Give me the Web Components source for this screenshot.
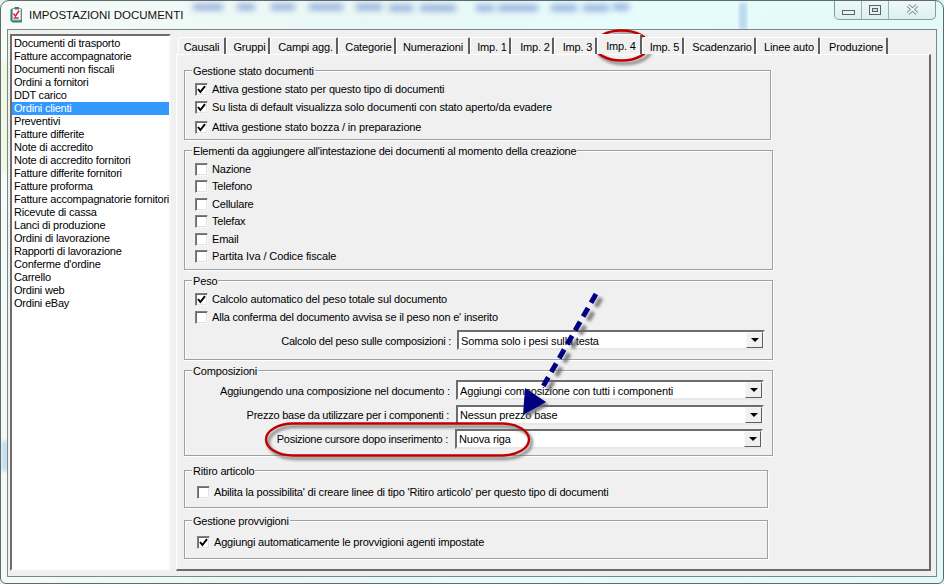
<!DOCTYPE html>
<html>
<head>
<meta charset="utf-8">
<title>Impostazioni documenti</title>
<style>
  html, body { margin: 0; padding: 0; background: #dff3f3; }
  body { font: 11px "Liberation Sans", Arial, sans-serif; letter-spacing: -.16px; color: #000; width: 944px; height: 584px; overflow: hidden; }
</style>
</head>
<body>
<win-frame caption="IMPOSTAZIONI DOCUMENTI">
  <doc-list></doc-list>
  <tab-pane>
    <group-box caption="Gestione stato documenti" style="--w:587px;--h:70px;--pad:11px;margin-top:0">
      <check-row checked>Attiva gestione stato per questo tipo di documenti</check-row>
      <check-row checked style="margin-top:4px">Su lista di default visualizza solo documenti con stato aperto/da evadere</check-row>
      <check-row checked style="margin-top:6px">Attiva gestione stato bozza / in preparazione</check-row>
    </group-box>
    <group-box caption="Elementi da aggiungere all'intestazione dei documenti al momento della creazione" style="--w:589px;--h:120px;--pad:11px;margin-top:10px;letter-spacing:-.21px">
      <check-row>Nazione</check-row>
      <check-row style="margin-top:3px">Telefono</check-row>
      <check-row style="margin-top:4px">Cellulare</check-row>
      <check-row style="margin-top:3px">Telefax</check-row>
      <check-row style="margin-top:4px">Email</check-row>
      <check-row style="margin-top:3px;letter-spacing:-.1px">Partita Iva / Codice fiscale</check-row>
    </group-box>
    <group-box caption="Peso" style="--w:589px;--h:80px;--pad:11px;margin-top:10px">
      <check-row checked>Calcolo automatico del peso totale sul documento</check-row>
      <check-row style="margin-top:4px;letter-spacing:-.19px">Alla conferma del documento avvisa se il peso non e' inserito</check-row>
      <combo-row value="Somma solo i pesi sulla testa" style="--lw:266px;--cw:308px;--lg:6px;--ty:2px;--ls:-.27px;margin-top:6px">Calcolo del peso sulle composizioni :</combo-row>
    </group-box>
    <group-box caption="Composizioni" style="--w:589px;--h:86px;--pad:9px;margin-top:10px">
      <combo-row value="Aggiungi composizione con tutti i componenti" style="--lw:265px;--cw:308px;--lg:6px;--ty:2px;--ls:-.18px">Aggiungendo una composizione nel documento :</combo-row>
      <combo-row value="Nessun prezzo base" style="--lw:264px;--cw:308px;--lg:7px;--ls:-.25px;margin-top:5px">Prezzo base da utilizzare per i componenti :</combo-row>
      <combo-row value="Nuova riga" style="--lw:263px;--cw:308px;--lg:7px;--ls:-.27px;margin-top:4px">Posizione cursore dopo inserimento :</combo-row>
    </group-box>
    <group-box caption="Ritiro articolo" style="--w:584px;--h:38px;--pad:14px;--ci:12px;margin-top:14px;letter-spacing:-.19px">
      <check-row>Abilita la possibilita' di creare linee di tipo 'Ritiro articolo' per questo tipo di documenti</check-row>
    </group-box>
    <group-box caption="Gestione provvigioni" style="--w:584px;--h:39px;--pad:14px;--ci:12px;margin-top:12px;letter-spacing:-.2px">
      <check-row checked>Aggiungi automaticamente le provvigioni agenti impostate</check-row>
    </group-box>
  </tab-pane>
  <note-overlay slot="overlay"></note-overlay>
</win-frame>

<script>
class WinFrame extends HTMLElement {
  constructor() {
    super();
    this.attachShadow({ mode: 'open' });
    this.shadowRoot.innerHTML = `
      <style>
        :host { display: block; width: 944px; height: 584px; position: relative; overflow: hidden; }
        .frame { box-sizing: border-box; width: 944px; height: 584px; border: 1px solid #5f6a6e; border-radius: 9px 9px 6px 6px;
          background: linear-gradient(100deg, #f6fbf6 0%, #e9f8f5 35%, #e6fcfc 60%, #e2f9fa 100%);
          position: relative; overflow: hidden; display: flex; flex-direction: column; padding: 0 6px 6px; }
        .glass { position: absolute; left: 0; top: 0; width: 944px; height: 584px; }
        .bar { position: relative; height: 28px; display: flex; align-items: flex-start; flex: none; }
        .bar svg.doc { margin: 6px 0 0 3px; flex: none; }
        .cap { margin: 7px 0 0 6px; font-size: 11.5px; letter-spacing: 0; line-height: 14px; color: #111; text-shadow: 0 0 4px #fff; flex: 1; }
        .client { position: relative; flex: 1; box-sizing: border-box; border: 1px solid #7d8689; background: #f0f0f0;
          display: flex; padding: 4px 5px 5px 2px; gap: 5px; min-height: 0; }
        caption-btns { margin: -1px 1px 0 0; }
      </style>
      <div class="frame">
        <svg class="glass" viewBox="0 0 944 584" aria-hidden="true">
          <defs><filter id="b" x="-30%" y="-300%" width="160%" height="700%"><feGaussianBlur stdDeviation="3.2"/></filter>
          <filter id="c"><feGaussianBlur stdDeviation="2"/></filter></defs>
          <g fill="#8fa9dc" filter="url(#b)">
            <rect x="192" y="3" width="30" height="6"/><rect x="236" y="3" width="18" height="6"/>
            <rect x="270" y="3" width="24" height="6"/><rect x="308" y="3" width="34" height="6"/>
            <rect x="355" y="3" width="26" height="6"/><rect x="388" y="4" width="24" height="6"/>
            <rect x="419" y="4" width="36" height="6"/><rect x="475" y="4" width="18" height="6"/>
            <rect x="497" y="4" width="40" height="6"/><rect x="550" y="4" width="26" height="6"/>
            <rect x="582" y="4" width="26" height="6"/><rect x="612" y="3" width="16" height="6"/>
          </g>
          <rect x="738" y="2" width="8" height="27" fill="#bcd6ee" filter="url(#c)"/>
          <rect x="1" y="60" width="6" height="110" fill="#eef6d8" filter="url(#c)"/>
          <rect x="1" y="440" width="6" height="30" fill="#bcd8ee" filter="url(#c)"/>
        </svg>
        <div class="bar">
          <svg class="doc" width="13" height="16" viewBox="0 0 13 16" aria-hidden="true">
            <path d="M1 2.5h10.5V15H2.5L1 13.5Z" fill="#2f9c98" stroke="#2c6f76"/>
            <rect x="2.5" y="1.5" width="8.5" height="11.5" fill="#fff" stroke="#93a4aa"/>
            <rect x="4.5" y="0" width="4.5" height="2.5" fill="#55707a"/>
            <path d="M3.5 6.5l2 2.6 3.6-5.6M3.7 11h5" fill="none" stroke="#d02a2a" stroke-width="1.5"/>
          </svg>
          <span class="cap"></span>
          <caption-btns></caption-btns>
        </div>
        <div class="client"><slot></slot></div>
      </div>
      <slot name="overlay"></slot>
    `;
  }

  connectedCallback() {
    this.shadowRoot.querySelector('.cap').textContent = this.getAttribute('caption');
  }
}

class CaptionBtns extends HTMLElement {
  constructor() {
    super();
    this.attachShadow({ mode: 'open' });
    this.shadowRoot.innerHTML = `
      <style>
        :host { display: flex; height: 20px; box-sizing: border-box; border: 1px solid #8b9aa0; border-top: 0; border-radius: 0 0 5px 5px;
          background: linear-gradient(#eef9f9, #dcf0f0); }
        div { display: flex; align-items: center; justify-content: center; height: 100%; border-right: 1px solid #9fb0b4; box-sizing: border-box; }
        div:last-child { border-right: 0; }
        .min { width: 27px; padding-top: 6px; } .max { width: 27px; } .close { width: 46px; }
        svg { display: block; }
      </style>
      <div class="min"><svg width="13" height="5" viewBox="0 0 13 5"><rect x=".5" y=".5" width="12" height="4" fill="#e8f2f2" stroke="#56646a"/></svg></div>
      <div class="max"><svg width="12" height="10" viewBox="0 0 12 10"><rect x=".5" y=".5" width="11" height="9" fill="#e8f2f2" stroke="#56646a"/><rect x="3.5" y="3.5" width="5" height="3" fill="#cfdcdf" stroke="#56646a"/></svg></div>
      <div class="close"><svg width="13" height="11" viewBox="0 0 13 11"><path d="M2 1.5l9 8M11 1.5l-9 8" stroke="#6b7b80" stroke-width="3.6" fill="none"/><path d="M2 1.5l9 8M11 1.5l-9 8" stroke="#f2f7f7" stroke-width="1.7" fill="none"/></svg></div>
    `;
  }
}

class DocList extends HTMLElement {
  constructor() {
    super();
    this.attachShadow({ mode: 'open' });
    const items = ['Documenti di trasporto', 'Fatture accompagnatorie', 'Documenti non fiscali', 'Ordini a fornitori',
      'DDT carico', 'Ordini clienti', 'Preventivi', 'Fatture differite', 'Note di accredito', 'Note di accredito fornitori',
      'Fatture differite fornitori', 'Fatture proforma', 'Fatture accompagnatorie fornitori', 'Ricevute di cassa',
      'Lanci di produzione', 'Ordini di lavorazione', 'Rapporti di lavorazione', 'Conferme d\'ordine', 'Carrello',
      'Ordini web', 'Ordini eBay'];
    this.shadowRoot.innerHTML = `
      <style>
        :host { display: block; box-sizing: border-box; width: 161px; flex: none; background: #fff; letter-spacing: -.21px;
          border: 2px solid; border-color: #6d6d6d #f7f7f7 #f7f7f7 #6d6d6d; padding-top: 1px; overflow: hidden; }
        div { height: 13px; line-height: 13px; padding-left: 2px; white-space: nowrap; }
        .sel { background: #3399ff; color: #fff; }
      </style>
      ${items.map(t => `<div class="${t === 'Ordini clienti' ? 'sel' : ''}">${t}</div>`).join('')}
    `;
  }
}

class TabPane extends HTMLElement {
  constructor() {
    super();
    this.attachShadow({ mode: 'open' });
    // label, width, left padding to sit the label where the original has it
    const tabs = [['Causali', 48, 0], ['Gruppi', 44, 4], ['Campi agg.', 68, 4], ['Categorie', 58, 4], ['Numerazioni', 74, 1],
      ['Imp. 1', 41, 4], ['Imp. 2', 43, 6], ['Imp. 3', 43, 5], ['Imp. 4', 45, 4], ['Imp. 5', 42, 4],
      ['Scadenzario', 72, 5], ['Linee auto', 64, 3], ['Produzione', 68, 5]];
    this.shadowRoot.innerHTML = `
      <style>
        :host { display: flex; flex-direction: column; flex: 1; min-width: 0; }
        .strip { display: flex; height: 20px; flex: none; padding-left: 2px; position: relative; z-index: 1; }
        .tab { box-sizing: border-box; height: 17px; margin-top: 3px; text-align: center; line-height: 18px; white-space: nowrap;
          border: 1px solid; border-color: #fff #5f5f5f transparent #fff; border-right-width: 2px; border-bottom: 0; border-radius: 2px 2px 0 0; background: #f0f0f0; }
        .tab.on { height: 20px; margin-top: 0; line-height: 22px; }
        .page { box-sizing: border-box; flex: 1; border: 1px solid; border-color: #fff #6b6b6b #6b6b6b #fff; border-right-width: 2px; border-bottom-width: 2px;
          padding: 15px 0 0 7px; background: #f0f0f0; }
      </style>
      <div class="strip">${tabs.map(([t, w, p]) => `<div class="tab${t === 'Imp. 4' ? ' on' : ''}" style="width:${w}px;padding-left:${p}px">${t}</div>`).join('')}</div>
      <div class="page"><slot></slot></div>
    `;
  }
}

class GroupBox extends HTMLElement {
  constructor() {
    super();
    this.attachShadow({ mode: 'open' });
    this.shadowRoot.innerHTML = `
      <style>
        :host { display: block; box-sizing: border-box; width: var(--w); height: var(--h); position: relative;
          border: 1px solid #a0a0a0; box-shadow: 1px 1px 0 #fff, inset 1px 1px 0 #fff;
          padding: var(--pad, 10px) 0 0 var(--ci, 10px); }
        .title { position: absolute; left: 7px; top: -6px; line-height: 13px; padding: 0 1px; background: #f0f0f0; white-space: nowrap; }
      </style>
      <span class="title"></span>
      <slot></slot>
    `;
  }

  connectedCallback() {
    this.shadowRoot.querySelector('.title').textContent = this.getAttribute('caption');
  }
}

class CheckRow extends HTMLElement {
  constructor() {
    super();
    this.attachShadow({ mode: 'open' });
    this.shadowRoot.innerHTML = `
      <style>
        :host { display: flex; align-items: center; height: 14px; gap: 4px; white-space: nowrap; }
        .box { box-sizing: border-box; width: 13px; height: 13px; flex: none; background: #fff; border: 1px solid; border-color: #808080 #f8f8f8 #f8f8f8 #808080;
          box-shadow: inset 1px 1px 0 #6a6a6a, inset -1px -1px 0 #e3e3e3; display: flex; align-items: center; justify-content: center; }
        svg { display: none; }
        :host([checked]) svg { display: block; }
      </style>
      <span class="box"><svg width="9" height="9" viewBox="0 0 9 9"><path d="M1 4l2.4 3L8 1.2" fill="none" stroke="#000" stroke-width="2"/></svg></span>
      <slot></slot>
    `;
  }
}

class ComboRow extends HTMLElement {
  constructor() {
    super();
    this.attachShadow({ mode: 'open' });
    this.shadowRoot.innerHTML = `
      <style>
        :host { display: flex; align-items: center; height: 20px; white-space: nowrap; margin-left: -10px; }
        .lbl { width: var(--lw); text-align: right; flex: none; padding-top: var(--ty, 0); letter-spacing: var(--ls, -.16px); }
        .combo { box-sizing: border-box; width: var(--cw); height: 20px; margin-left: var(--lg); flex: none; display: flex; align-items: center; background: #fff;
          border: 2px solid; border-color: #6d6d6d #f4f4f4 #e8e8e8 #6d6d6d; padding-left: 2px; }
        .val { flex: 1; padding-top: var(--ty, 0); }
        .btn { box-sizing: border-box; width: 17px; height: 16px; background: #f0f0f0; border: 1px solid; border-color: #f8f8f8 #5f5f5f #5f5f5f #f8f8f8;
          display: flex; align-items: center; justify-content: center; }
        .btn i { width: 0; height: 0; border: 4px solid transparent; border-top: 4px solid #000; border-bottom: 0; }
      </style>
      <span class="lbl"><slot></slot></span>
      <span class="combo"><span class="val"></span><span class="btn"><i></i></span></span>
    `;
  }

  connectedCallback() {
    this.shadowRoot.querySelector('.val').textContent = this.getAttribute('value');
  }
}

// red marks and the blue arrow drawn over the finished window
class NoteOverlay extends HTMLElement {
  constructor() {
    super();
    this.attachShadow({ mode: 'open' });
    this.shadowRoot.innerHTML = `
      <style>
        :host { position: absolute; left: 0; top: 0; width: 944px; height: 584px; pointer-events: none; }
        svg { display: block; }
      </style>
      <svg width="944" height="584" viewBox="0 0 944 584" aria-hidden="true">
        <defs><filter id="s" x="-20%" y="-20%" width="140%" height="140%"><feGaussianBlur stdDeviation="1.6"/></filter></defs>
        <g filter="url(#s)" fill="none" stroke="#666" opacity=".8">
          <ellipse cx="624.5" cy="48.5" rx="27" ry="15" stroke-width="3"/>
          <rect x="268.5" y="426.5" width="263" height="32" rx="27" ry="16" stroke-width="3"/>
          <path d="M601 298L546 394" stroke-width="5" stroke-dasharray="10 6"/>
          <path d="M526 418L528 391L549 405Z" fill="#666" stroke="none"/>
        </g>
        <g fill="none" stroke="#c00000">
          <ellipse cx="621.5" cy="45.5" rx="27" ry="15" stroke-width="2.4"/>
          <rect x="266" y="423.5" width="263" height="32" rx="27" ry="16" stroke-width="2.4"/>
        </g>
        <path d="M596 294L541 390" fill="none" stroke="#000080" stroke-width="5" stroke-dasharray="10 6"/>
        <path d="M523 415L525 388L546 402Z" fill="#000080"/>
      </svg>
    `;
  }
}

customElements.define('win-frame', WinFrame);
customElements.define('caption-btns', CaptionBtns);
customElements.define('doc-list', DocList);
customElements.define('tab-pane', TabPane);
customElements.define('group-box', GroupBox);
customElements.define('check-row', CheckRow);
customElements.define('combo-row', ComboRow);
customElements.define('note-overlay', NoteOverlay);
</script>
</body>
</html>
